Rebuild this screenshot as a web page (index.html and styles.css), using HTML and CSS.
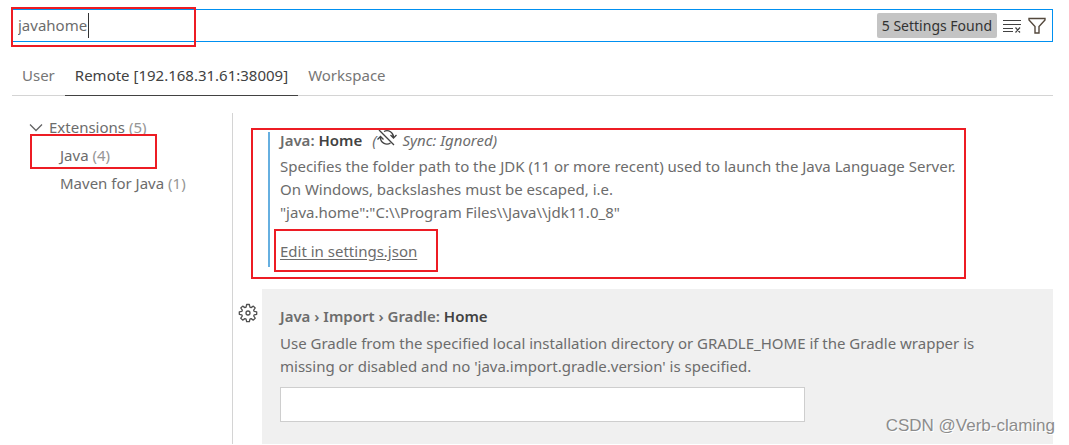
FILE: index.html
```html
<!DOCTYPE html>
<html lang="en">
<head>
<meta charset="utf-8">
<title>Settings</title>
<link rel="stylesheet" href="styles.css">
</head>
<body>
<div class="page">
  <header class="search">
    <input class="search-input" type="text" value="javahome" aria-label="Search settings">
    <span class="caret"></span>
    <span class="count">5 Settings Found</span>
    <button class="icon-button" type="button" aria-label="Clear search results">
      <svg width="20" height="20" viewBox="0 0 20 20" fill="none" stroke="#424242" stroke-width="1.2"><path d="M1 4.500h18M1 8.500h18M1 12.500h10M1 15.500h10M13.500 11.500l4.500 5M18 11.500l-4.500 5"/></svg>
    </button>
    <button class="icon-button" type="button" aria-label="Filter settings">
      <svg width="20" height="20" viewBox="0 0 20 20" fill="none" stroke="#54483c" stroke-width="1.4"><path d="M2 2.500h16v1.500l-6 6.500v6.500H8v-6.500L2 4z"/></svg>
    </button>
    <span class="mark mark-search"></span>
  </header>
  <nav class="tabs">
    <button class="tab" type="button">User</button>
    <button class="tab active" type="button">Remote [192.168.31.61:38009]</button>
    <button class="tab" type="button">Workspace</button>
  </nav>
  <div class="body">
    <aside class="toc">
      <a class="toc-row" href="#extensions">
        <svg width="14" height="14" viewBox="0 0 14 14" fill="none" stroke="#646465" stroke-width="1.3"><path d="M1 4.500l6 6 6-6"/></svg>
        <span>Extensions <span class="num">(5)</span></span>
      </a>
      <a class="toc-row child" href="#java"><span>Java <span class="num">(4)</span></span><span class="mark mark-java"></span></a>
      <a class="toc-row child" href="#maven"><span>Maven for Java <span class="num">(1)</span></span></a>
    </aside>
    <main class="settings">
      <section class="setting modified" id="java">
        <div class="content">
          <h2 class="title">Java: <span class="name">Home</span>
            <span class="sync">(<svg class="sync-icon" width="22" height="18" viewBox="0 0 22 18" fill="none" stroke="#424242" stroke-width="1.3"><path d="M3 1l15 15M8 2.500A6.500 6.500 0 0 1 17.500 8.500M14.500 6l3 3 3-3M14.500 14A6.500 6.500 0 0 1 4.500 8M1.500 10.500l3-3 3 3"/></svg> Sync: Ignored)</span>
          </h2>
          <p class="description">Specifies the folder path to the JDK (11 or more recent) used to launch the Java Language Server.<br>On Windows, backslashes must be escaped, i.e.<br>"java.home":"C:\\Program Files\\Java\\jdk11.0_8"</p>
          <a class="edit" href="#settings-json">Edit in settings.json<span class="mark mark-edit"></span></a>
        </div>
        <span class="mark mark-setting"></span>
      </section>
      <section class="setting focused">
        <button class="gear" type="button" aria-label="More actions">
          <svg width="20" height="20" viewBox="0 0 20 20" fill="none" stroke="#505050" stroke-width="1.3" stroke-linejoin="round"><path d="M8.600 1.500h2.800l.5 2.600 1.200.5 2.200-1.500 1.900 1.900-1.500 2.200.5 1.200 2.500.4v2.500l-2.500.5-.5 1.200 1.500 2.200-1.900 1.900-2.200-1.500-1.200.5-.5 2.500H8.600l-.5-2.500-1.200-.5-2.200 1.500-1.900-1.900 1.500-2.200-.5-1.200-2.500-.5V8.800l2.500-.4.5-1.200L2.800 5l1.900-1.900 2.200 1.500 1.200-.5z"/><circle cx="10" cy="10" r="2"/></svg>
        </button>
        <div class="content">
          <h2 class="title">Java › Import › Gradle: <span class="name">Home</span></h2>
          <p class="description"><label for="gradle-home">Use Gradle from the specified local installation directory or GRADLE_HOME if the Gradle wrapper is<br>missing or disabled and no 'java.import.gradle.version' is specified.</label></p>
          <input class="text-box" id="gradle-home" type="text">
        </div>
      </section>
    </main>
  </div>
  <span class="watermark">CSDN @Verb-claming</span>
</div>
</body>
</html>
```
FILE: styles.css
```css
* { box-sizing: border-box; }
body {
  margin: 0;
  background: #fff;
  color: #6c6c6c;
  font: 15px/23px "Noto Sans", "Open Sans", sans-serif;
}
button, input { font: inherit; color: inherit; }
button { padding: 0; border: 0; background: none; }
a { color: inherit; text-decoration: none; }
svg { display: block; }
.page { position: relative; padding: 9px 16px 0 12px; }

.search {
  position: relative;
  display: flex;
  align-items: center;
  gap: 5px;
  height: 33px;
  padding-right: 5px;
  border: 1px solid #0090f1;
}
.search-input {
  flex: 1;
  min-width: 0;
  padding: 0 5px;
  border: 0;
  outline: 0;
  background: none;
}
.caret {
  position: absolute;
  left: 75px;
  top: 3px;
  width: 1px;
  height: 25px;
  background: #333;
}
.count {
  padding: 1px 5px;
  border-radius: 2px;
  background: #c4c4c4;
  color: #333;
  font-size: 14px;
}
.icon-button { width: 20px; height: 20px; }

.tabs {
  display: flex;
  margin-top: 12px;
  border-bottom: 1px solid #d4d4d4;
}
.tab {
  height: 42px;
  margin-bottom: -1px;
  padding: 2px 10px 0;
  border-bottom: 1px solid transparent;
  color: #767676;
}
.tab.active { border-color: #424242; color: #424242; }

.body { display: flex; margin-top: 17px; }
.toc { flex: 0 0 220px; }
.toc-row {
  position: relative;
  display: flex;
  align-items: center;
  gap: 6px;
  height: 28px;
  padding-left: 17px;
}
.toc-row.child { padding-left: 48px; }
.num { color: #969696; }

.settings { flex: 1; min-width: 0; border-left: 1px solid #d4d4d4; }
.setting { position: relative; margin-left: 29px; }
.content { padding: 0 18px; }
.modified { padding: 16px 0 26px; }
.modified::before {
  content: "";
  position: absolute;
  left: 6px;
  top: 19px;
  bottom: 22px;
  width: 2px;
  background: #66afe0;
}
.focused { padding: 16px 0 22px; background: #f0f0f0; }
.title { margin: 0 0 3px; font-size: 15px; font-weight: 600; }
.name { color: #424242; }
.sync { margin-left: 6px; font-weight: 400; font-style: italic; }
.sync-icon { display: inline-block; vertical-align: -1px; }
.description { margin: 0 0 16px; white-space: nowrap; }
.edit { position: relative; text-decoration: underline; text-underline-offset: 2px; }
.focused .title { margin-bottom: 4px; }
.focused .description { margin-bottom: 9px; }
.text-box {
  display: block;
  width: 525px;
  max-width: 100%;
  height: 35px;
  padding: 0 6px;
  border: 1px solid #cecece;
  background: #fff;
}
.gear { position: absolute; left: -24px; top: 14px; }

.mark { position: absolute; border: 2px solid #ed1c24; pointer-events: none; }
.mark-search { left: -2px; top: -3px; width: 185px; height: 40px; }
.mark-java { left: 18px; top: -7px; width: 127px; height: 35px; }
.mark-setting { left: -11px; top: 15px; width: 715px; height: 151px; }
.mark-edit { left: -6px; top: -12px; width: 164px; height: 43px; }
.watermark {
  position: absolute;
  right: 14px;
  bottom: 4px;
  color: #8c8c8c;
  font: 17px/28px "Liberation Sans", sans-serif;
  text-shadow: 1px 1px #fff;
}
```
